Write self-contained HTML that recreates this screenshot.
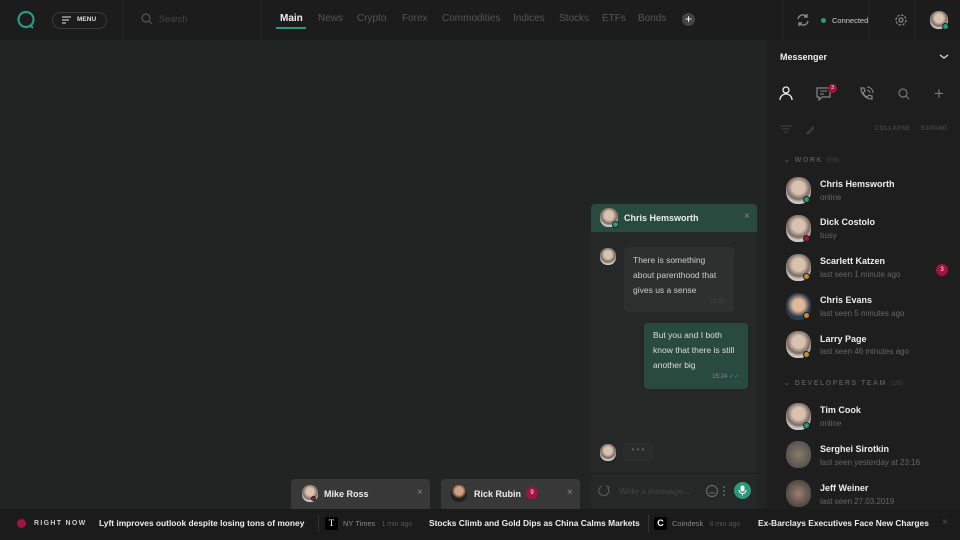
<!DOCTYPE html><html><head><style>
*{box-sizing:border-box;margin:0;padding:0}
body{width:960px;height:540px;background:#222323;font-family:"Liberation Sans",sans-serif;color:#ddd;position:relative;overflow:hidden;font-size:9px}
.abs{position:absolute}
.top{left:0;top:0;width:960px;height:40px;background:#1c1c1c}
.vd{position:absolute;top:0;width:1px;height:40px;background:#262626}
.nav{position:absolute;top:13px;font-size:10px;color:#555}
.av{position:absolute;border-radius:45%;background:radial-gradient(circle at 50% 40%,#d9c2b0 0 30%,#7a6a60 55%,#c8c8c8 70%)}
.dot{position:absolute;width:7px;height:7px;border-radius:50%;border:1px solid #1e1e1e}
.name{position:absolute;left:820px;font-size:9px;font-weight:bold;color:#eee}
.st{position:absolute;left:820px;font-size:8px;color:#666}
.tab{position:absolute;top:479px;height:30px;width:139px;background:#383838;border-radius:4px 4px 0 0}
.tk{position:absolute;top:518px;font-size:8.4px;font-weight:bold;color:#eee;white-space:nowrap}
</style></head><body>
<div class="abs top"></div>
<svg class="abs" style="left:16px;top:10px" width="20" height="20"><circle cx="10" cy="9.5" r="7.5" fill="none" stroke="#2a9a78" stroke-width="2.2"/><path d="M14 15l3 3" stroke="#2a9a78" stroke-width="2"/></svg>
<div class="abs" style="left:52px;top:12px;width:55px;height:17px;border:1px solid #3a3a3a;border-radius:9px"></div>
<svg class="abs" style="left:62px;top:16px" width="10" height="9"><path d="M0 1h9M0 4h7M0 7h4" stroke="#bbb" stroke-width="1.2"/></svg>
<div class="abs" style="left:77px;top:16px;font-size:6.5px;font-weight:bold;color:#ddd">MENU</div>
<div class="vd" style="left:123px"></div><div class="vd" style="left:260px"></div><div class="vd" style="left:782px"></div><div class="vd" style="left:868px"></div><div class="vd" style="left:915px"></div>
<svg class="abs" style="left:141px;top:13px" width="12" height="12"><circle cx="5" cy="5" r="4" fill="none" stroke="#555" stroke-width="1.2"/><path d="M8 8l3 3" stroke="#555" stroke-width="1.2"/></svg>
<div class="abs" style="left:159px;top:14px;font-size:9px;color:#444">Search</div>
<div class="nav" style="left:280px;color:#eee;font-weight:bold">Main</div>
<div class="abs" style="left:276px;top:27px;width:30px;height:2px;background:#2a9a78"></div>
<div class="nav" style="left:318px">News</div><div class="nav" style="left:357px">Crypto</div><div class="nav" style="left:402px">Forex</div><div class="nav" style="left:442px">Commodities</div><div class="nav" style="left:513px">Indices</div><div class="nav" style="left:559px">Stocks</div><div class="nav" style="left:602px">ETFs</div><div class="nav" style="left:638px">Bonds</div>
<div class="abs" style="left:682px;top:13px;width:13px;height:13px;border-radius:50%;background:#444;color:#fff;font-size:12px;line-height:12px;text-align:center">+</div>
<svg class="abs" style="left:796px;top:13px" width="14" height="14"><path d="M2 6a5 5 0 0 1 9-2M12 8a5 5 0 0 1-9 2" fill="none" stroke="#888" stroke-width="1.4"/><path d="M11 1v3h-3M3 13v-3h3" fill="none" stroke="#888" stroke-width="1.4"/></svg>
<div class="abs" style="left:821px;top:18px;width:5px;height:5px;border-radius:50%;background:#2a9a78"></div>
<div class="abs" style="left:832px;top:16px;font-size:7.5px;color:#ccc">Connected</div>
<svg class="abs" style="left:894px;top:13px" width="14" height="14"><circle cx="7" cy="7" r="5" fill="none" stroke="#888" stroke-width="1.3" stroke-dasharray="2.5 1.4"/><circle cx="7" cy="7" r="2" fill="none" stroke="#888" stroke-width="1.2"/></svg>
<div class="av" style="left:930px;top:11px;width:18px;height:18px"></div><div class="dot" style="left:942px;top:23px;background:#2a9a78"></div>

<div class="abs" style="left:767px;top:40px;width:193px;height:469px;background:#1e1e1e"></div>
<div class="abs" style="left:780px;top:52px;font-size:9px;font-weight:bold;color:#eee">Messenger</div>
<svg class="abs" style="left:939px;top:54px" width="10" height="6"><path d="M1 1l4 3 4-3" fill="none" stroke="#ddd" stroke-width="1.3"/></svg>
<svg class="abs" style="left:778px;top:86px" width="16" height="16"><circle cx="8" cy="4" r="3" fill="none" stroke="#eee" stroke-width="1.3"/><path d="M2 14a6 6 0 0 1 12 0" fill="none" stroke="#eee" stroke-width="1.3"/></svg>
<svg class="abs" style="left:816px;top:87px" width="16" height="14"><path d="M1 1h13v9H6l-3 3v-3H1z" fill="none" stroke="#888" stroke-width="1.2"/><path d="M4 4h7M4 7h4" stroke="#888"/></svg>
<div class="abs" style="left:828px;top:84px;width:9px;height:9px;border-radius:50%;background:#a0153e;font-size:5px;color:#fff;text-align:center;line-height:9px">3</div>
<svg class="abs" style="left:858px;top:86px" width="16" height="16"><path d="M3 2l3 0 1 3-2 2a8 8 0 0 0 4 4l2-2 3 1v3a11 11 0 0 1-11-11z" fill="none" stroke="#888" stroke-width="1.2"/><path d="M9 4a3 3 0 0 1 3 3M9 1a6 6 0 0 1 6 6" fill="none" stroke="#888"/></svg>
<svg class="abs" style="left:898px;top:88px" width="12" height="12"><circle cx="5" cy="5" r="4" fill="none" stroke="#777" stroke-width="1.2"/><path d="M8 8l3 3" stroke="#777" stroke-width="1.2"/></svg>
<div class="abs" style="left:934px;top:84px;font-size:17px;color:#777">+</div>
<svg class="abs" style="left:780px;top:125px" width="34" height="10"><path d="M0 1h12M2 4h8M4 7h4" stroke="#444"/><path d="M27 8l6-6 1 1-6 6h-1z" fill="none" stroke="#444"/></svg>
<div class="abs" style="left:875px;top:126px;font-size:6px;font-weight:bold;color:#444;letter-spacing:.3px">COLLAPSE</div>
<div class="abs" style="left:921px;top:126px;font-size:6px;font-weight:bold;color:#444;letter-spacing:.3px">EXPAND</div>
<div class="abs" style="left:784px;top:156px;font-size:7px;font-weight:bold;color:#555;letter-spacing:1.5px">⌄ WORK <span style="font-weight:normal;letter-spacing:0;color:#444;font-size:6px">(5/5)</span></div>
<div class="av" style="left:786px;top:177px;width:25px;height:27px"></div><div class="dot" style="left:803px;top:196px;background:#2a9a78"></div>
<div class="name" style="top:179px">Chris Hemsworth</div><div class="st" style="top:193px">online</div>
<div class="av" style="left:786px;top:215px;width:25px;height:27px"></div><div class="dot" style="left:803px;top:235px;background:#a0153e"></div>
<div class="name" style="top:217px">Dick Costolo</div><div class="st" style="top:231px">busy</div>
<div class="av" style="left:786px;top:254px;width:25px;height:27px"></div><div class="dot" style="left:803px;top:273px;background:#c88a30"></div>
<div class="name" style="top:256px">Scarlett Katzen</div><div class="st" style="top:270px">last seen 1 minute ago</div>
<div class="abs" style="left:936px;top:264px;width:12px;height:12px;border-radius:50%;background:#a0153e;color:#fff;font-size:6px;text-align:center;line-height:12px">3</div>
<div class="av" style="left:786px;top:293px;width:25px;height:27px;background:radial-gradient(circle at 50% 45%,#e0b89a 0 30%,#2d3a4a 60%)"></div><div class="dot" style="left:803px;top:312px;background:#c88a30"></div>
<div class="name" style="top:295px">Chris Evans</div><div class="st" style="top:309px">last seen 5 minutes ago</div>
<div class="av" style="left:786px;top:331px;width:25px;height:27px"></div><div class="dot" style="left:803px;top:351px;background:#c88a30"></div>
<div class="name" style="top:334px">Larry Page</div><div class="st" style="top:347px">last seen 46 minutes ago</div>
<div class="abs" style="left:784px;top:379px;font-size:7px;font-weight:bold;color:#555;letter-spacing:1.5px">⌄ DEVELOPERS TEAM <span style="font-weight:normal;letter-spacing:0;color:#444;font-size:6px">(1/3)</span></div>
<div class="av" style="left:786px;top:403px;width:25px;height:27px"></div><div class="dot" style="left:803px;top:422px;background:#2a9a78"></div>
<div class="name" style="top:405px">Tim Cook</div><div class="st" style="top:419px">online</div>
<div class="av" style="left:786px;top:441px;width:25px;height:27px;background:radial-gradient(circle,#8a7a6a,#444)"></div>
<div class="name" style="top:444px">Serghei Sirotkin</div><div class="st" style="top:458px">last seen yesterday at 23:16</div>
<div class="av" style="left:786px;top:480px;width:25px;height:27px;background:radial-gradient(circle,#9a8070,#333)"></div>
<div class="name" style="top:483px">Jeff Weiner</div><div class="st" style="top:497px">last seen 27.03.2019</div>

<div class="abs" style="left:591px;top:204px;width:166px;height:305px;background:#262727;border-radius:4px 4px 0 0"></div>
<div class="abs" style="left:591px;top:204px;width:166px;height:28px;background:#284a3f;border-radius:4px 4px 0 0"></div>
<div class="av" style="left:600px;top:208px;width:18px;height:19px"></div><div class="dot" style="left:612px;top:221px;background:#2a9a78"></div>
<div class="abs" style="left:624px;top:213px;font-size:9px;font-weight:bold;color:#eee">Chris Hemsworth</div>
<div class="abs" style="left:744px;top:211px;font-size:10px;color:#888">×</div>
<div class="av" style="left:600px;top:248px;width:16px;height:17px"></div>
<div class="abs" style="left:624px;top:247px;width:110px;height:65px;background:#2e2f2f;border-radius:4px;padding:6px 9px;font-size:8.5px;line-height:15px;color:#ccc">There is something about parenthood that gives us a sense<div style="text-align:right;font-size:6px;color:#444;line-height:8px">15:22</div></div>
<div class="abs" style="left:644px;top:323px;width:104px;height:66px;background:#284a3f;border-radius:4px;padding:5px 9px;font-size:8.5px;line-height:15px;color:#ddd">But you and I both know that there is still another big<div style="text-align:right;font-size:6px;color:#889;line-height:8px">15:24 <span style="color:#2a9a78">✓✓</span></div></div>
<div class="av" style="left:600px;top:444px;width:16px;height:17px"></div>
<div class="abs" style="left:622px;top:443px;width:32px;height:18px;background:#2a2b2b;border-radius:4px;color:#666;text-align:center;font-size:8px;line-height:14px">• • •</div>
<div class="abs" style="left:591px;top:473px;width:166px;height:1px;background:#1e1e1e"></div>
<svg class="abs" style="left:597px;top:484px" width="14" height="14"><path d="M11 4a5 5 0 1 1-6-2M9 2l3 1-1 3" fill="none" stroke="#555" stroke-width="1.2"/></svg>
<div class="abs" style="left:619px;top:486px;font-size:8.5px;color:#444">Write a message...</div>
<svg class="abs" style="left:705px;top:484px" width="22" height="14"><circle cx="7" cy="7" r="5.5" fill="none" stroke="#666" stroke-width="1.2"/><path d="M4.5 8a3 3 0 0 0 5 0" fill="none" stroke="#666"/><circle cx="19" cy="3" r="1" fill="#666"/><circle cx="19" cy="7" r="1" fill="#666"/><circle cx="19" cy="11" r="1" fill="#666"/></svg>
<div class="abs" style="left:734px;top:482px;width:17px;height:17px;border-radius:50%;background:#2a9a78"></div>
<svg class="abs" style="left:738px;top:485px" width="9" height="11"><rect x="2.5" y="0.5" width="4" height="6" rx="2" fill="#fff"/><path d="M1 5a3.5 3.5 0 0 0 7 0M4.5 8.5v2" fill="none" stroke="#fff"/></svg>

<div class="tab" style="left:291px"></div>
<div class="av" style="left:302px;top:485px;width:16px;height:17px"></div><div class="dot" style="left:311px;top:496px;width:5px;height:5px;background:#a0153e"></div>
<div class="abs" style="left:324px;top:489px;font-size:9px;font-weight:bold;color:#eee">Mike Ross</div>
<div class="abs" style="left:417px;top:487px;font-size:10px;color:#888">×</div>
<div class="tab" style="left:441px"></div>
<div class="av" style="left:451px;top:485px;width:16px;height:17px;background:radial-gradient(circle at 50% 35%,#d0a080 0 30%,#222 55%)"></div>
<div class="abs" style="left:474px;top:489px;font-size:9px;font-weight:bold;color:#eee">Rick Rubin</div>
<div class="abs" style="left:526px;top:487px;width:12px;height:12px;border-radius:50%;background:#a0153e;color:#fff;font-size:6px;text-align:center;line-height:12px">9</div>
<div class="abs" style="left:567px;top:487px;font-size:10px;color:#888">×</div>

<div class="abs" style="left:0;top:509px;width:960px;height:31px;background:#1b1b1b"></div>
<div class="abs" style="left:17px;top:519px;width:9px;height:9px;border-radius:50%;background:#a0153e"></div>
<div class="abs" style="left:34px;top:520px;font-size:7px;font-weight:bold;color:#ccc;letter-spacing:1.3px">RIGHT NOW</div>
<div class="tk" style="left:99px">Lyft improves outlook despite losing tons of money</div>
<div class="abs" style="left:318px;top:515px;width:1px;height:17px;background:#333"></div>
<div class="abs" style="left:325px;top:517px;width:13px;height:13px;background:#000;border-radius:2px;color:#fff;font-size:9px;text-align:center;line-height:13px;font-family:'Liberation Serif',serif">T</div>
<div class="abs" style="left:343px;top:519px;font-size:7.5px;color:#888">NY Times <span style="color:#555;font-size:7px;margin-left:4px">1 min ago</span></div>
<div class="tk" style="left:429px">Stocks Climb and Gold Dips as China Calms Markets</div>
<div class="abs" style="left:648px;top:515px;width:1px;height:17px;background:#333"></div>
<div class="abs" style="left:654px;top:517px;width:13px;height:13px;background:#000;border-radius:2px;color:#fff;font-size:9px;font-weight:bold;text-align:center;line-height:13px">C</div>
<div class="abs" style="left:672px;top:519px;font-size:7.5px;color:#888">Coindesk <span style="color:#555;font-size:7px;margin-left:4px">8 min ago</span></div>
<div class="tk" style="left:758px">Ex-Barclays Executives Face New Charges</div>
<div class="abs" style="left:942px;top:517px;font-size:10px;color:#555">×</div>
</body></html>
